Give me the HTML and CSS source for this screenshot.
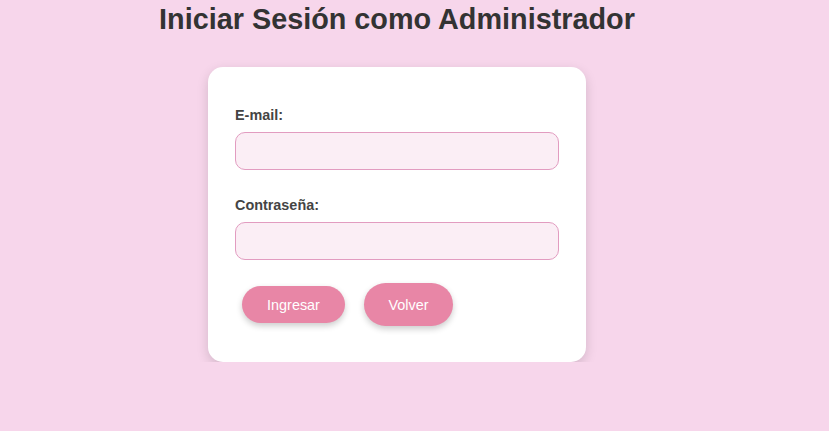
FILE: index.html
```html
<!DOCTYPE html>
<html lang="es">
<head>
<meta charset="utf-8">
<title>Iniciar Sesión</title>
<link rel="stylesheet" href="styles.css">
</head>
<body>
<div class="page">
  <h1 class="title">Iniciar Sesión como Administrador</h1>
  <form class="card">
    <label class="label" for="email">E-mail:</label>
    <input class="field" id="email" type="email">
    <label class="label" for="pass">Contraseña:</label>
    <input class="field" id="pass" type="password">
    <div class="actions">
      <button class="btn btn-submit" type="button">Ingresar</button>
      <a class="btn btn-back" href="#">Volver</a>
    </div>
  </form>
</div>
</body>
</html>
```
FILE: styles.css
```css
html, body {
  margin: 0;
  padding: 0;
  background: #f7d6eb;
  font-family: "Liberation Sans", Arial, sans-serif;
  color: #333;
}
.page {
  width: 794px;
  display: flex;
  flex-direction: column;
  align-items: center;
}
.title {
  margin: 3px 0 0;
  font-size: 28.8px;
  line-height: 32px;
  font-weight: bold;
  color: #333;
}
.card {
  margin-top: 32px;
  width: 378px;
  box-sizing: border-box;
  background: #fff;
  border-radius: 15px;
  box-shadow: 0 4px 12px rgba(0,0,0,0.15);
  padding: 38px 27px 36px;
  display: flex;
  flex-direction: column;
}
.label {
  font-size: 14.4px;
  font-weight: bold;
  color: #444;
  line-height: 18px;
  padding-top: 1px;
  margin-bottom: 8px;
}
.field {
  height: 38px;
  box-sizing: border-box;
  border: 1px solid #e29cc0;
  border-radius: 10px;
  background: #fbeef5;
  margin: 0 0 25px;
  padding: 0 10px;
  font-size: 15px;
}
.actions {
  display: flex;
  align-items: center;
  gap: 19px;
  padding-left: 7px;
  margin-top: -2px;
}
.btn {
  background: #e886a6;
  color: #fff;
  font-family: "Liberation Sans", Arial, sans-serif;
  font-size: 14.4px;
  border: none;
  border-radius: 22px;
  box-shadow: 0 3px 6px rgba(0,0,0,0.2);
  text-decoration: none;
  display: flex;
  align-items: center;
  justify-content: center;
  box-sizing: border-box;
}
.btn-submit {
  width: 103px;
  height: 37px;
}
.btn-back {
  width: 89px;
  height: 43px;
}
```
